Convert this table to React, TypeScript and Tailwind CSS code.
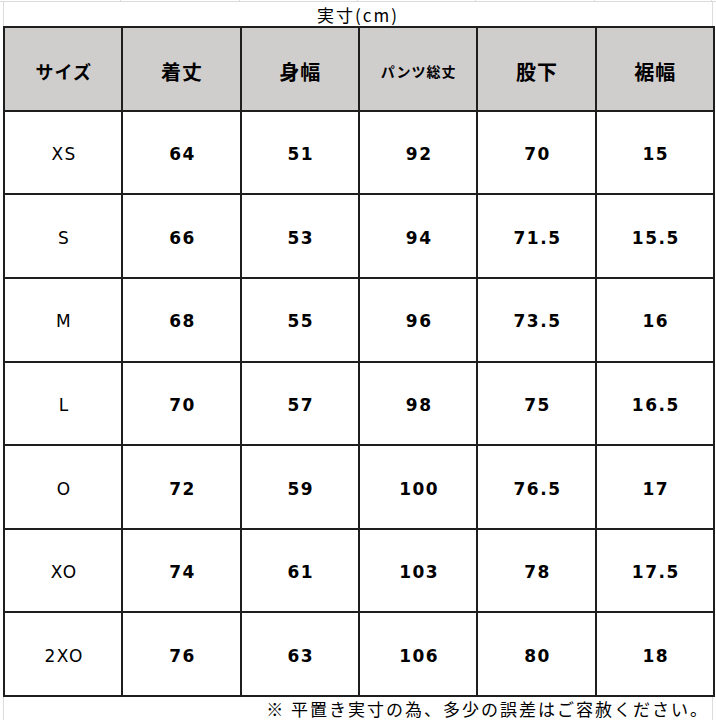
import React from "react";

const headers: { label: string; cls: string }[] = [
  { label: "サイズ", cls: "text-[18px] tracking-[1px]" },
  { label: "着丈", cls: "text-[20px] tracking-[1px]" },
  { label: "身幅", cls: "text-[20px] tracking-[1px]" },
  { label: "パンツ総丈", cls: "text-[14px] tracking-[1px]" },
  { label: "股下", cls: "text-[20px] tracking-[1px]" },
  { label: "裾幅", cls: "text-[20px] tracking-[1px]" },
];

const rows: string[][] = [
  ["XS", "64", "51", "92", "70", "15"],
  ["S", "66", "53", "94", "71.5", "15.5"],
  ["M", "68", "55", "96", "73.5", "16"],
  ["L", "70", "57", "98", "75", "16.5"],
  ["O", "72", "59", "100", "76.5", "17"],
  ["XO", "74", "61", "103", "78", "17.5"],
  ["2XO", "76", "63", "106", "80", "18"],
];

export default function App() {
  return (
    <div
      className="relative w-[716px] h-[720px] bg-white overflow-hidden text-black"
      style={{ fontFamily: '"Liberation Sans", "Noto Sans CJK JP", sans-serif' }}
    >
      {/* faint spreadsheet row above */}
      <div className="h-[2px] border-b border-[#dcdcdc] flex">
        <div className="w-[121px] border-r border-[#dcdcdc]" />
        <div className="w-[119px] border-r border-[#dcdcdc]" />
        <div className="w-[118px] border-r border-[#dcdcdc]" />
        <div className="w-[118px] border-r border-[#dcdcdc]" />
        <div className="w-[119px] border-r border-[#dcdcdc]" />
        <div className="w-[117px] border-r border-[#dcdcdc]" />
      </div>
      {/* title row */}
      <div
        className="h-[24px] mx-[3px] border-l border-r border-[#dcdcdc] flex items-center justify-center text-[17px] tracking-[2px] leading-none pt-[1px]"
        style={{ fontFamily: '"Noto Sans CJK JP", sans-serif' }}
      >
        実寸(cm)
      </div>
      {/* table */}
      <div
        className="ml-[3px] w-[712px] h-[671px] bg-[#1e1e1e] p-[2px] grid grid-cols-6 gap-[2px]"
        style={{ gridTemplateRows: "repeat(8, 1fr)" }}
      >
        {headers.map((h) => (
          <div
            key={h.label}
            className={`bg-[#d0cecd] flex items-center justify-center font-bold pt-[6px] pl-[1px] ${h.cls}`}
            style={{ fontFamily: '"Noto Sans CJK JP", sans-serif' }}
          >
            {h.label}
          </div>
        ))}
        {rows.map((r) =>
          r.map((v, i) => (
            <div
              key={r[0] + i}
              className={`bg-white flex items-center justify-center text-[17px] tracking-[1.5px] pt-[5px] pl-[2px] ${
                i === 0 ? "font-normal" : "font-bold"
              }`}
              style={{ fontFamily: '"DejaVu Sans", sans-serif' }}
            >
              {v}
            </div>
          ))
        )}
      </div>
      {/* footer */}
      <div
        className="h-[23px] mx-[3px] border-l border-r border-[#dcdcdc] flex items-center justify-end pr-[3px] text-[17px] tracking-[2px] leading-none"
        style={{ fontFamily: '"Noto Sans CJK JP", sans-serif' }}
      >
        ※ 平置き実寸の為、多少の誤差はご容赦ください。
      </div>
    </div>
  );
}
